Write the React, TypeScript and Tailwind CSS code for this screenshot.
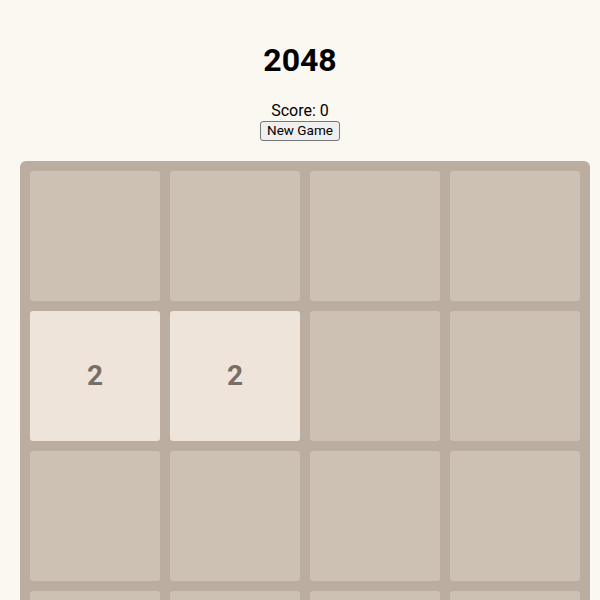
import React, { useState } from 'react';

type Grid = number[][];

const startGrid = (): Grid => [
  [0, 0, 0, 0],
  [2, 2, 0, 0],
  [0, 0, 0, 0],
  [0, 0, 0, 0],
];

const tileClass = (value: number) => {
  if (value === 0) return 'bg-[#cdc1b4]';
  if (value === 2) return 'bg-[#eee4da] text-[#776e65]';
  if (value === 4) return 'bg-[#ede0c8] text-[#776e65]';
  return 'bg-[#f2b179] text-[#f9f6f2]';
};

export default function App() {
  const [grid, setGrid] = useState<Grid>(startGrid);
  const [score, setScore] = useState(0);

  const newGame = () => {
    setGrid(startGrid());
    setScore(0);
  };

  return (
    <div className="min-h-screen bg-[#faf8f0] font-['Roboto','Liberation_Sans',sans-serif] text-black pt-[36px]">
      <h1 className="text-center text-[32px] font-bold leading-normal">2048</h1>
      <div className="mt-[15px] flex flex-col items-center">
        <p className="text-[16px] leading-normal">Score: {score}</p>
        <button
          onClick={newGame}
          className="-mt-[2px] h-[20px] w-[80px] rounded-[3px] border border-[#767676] bg-[#efefef] text-[13.5px] leading-none text-black"
        >
          New Game
        </button>
      </div>
      <div className="ml-[20px] mt-[20px] grid w-[570px] grid-cols-4 gap-[10px] rounded-[6px] bg-[#bbada0] p-[10px]">
        {grid.flat().map((value, i) => (
          <div
            key={i}
            className={`flex h-[130px] w-[130px] items-center justify-center rounded-[3px] text-[28px] font-bold ${tileClass(value)}`}
          >
            {value !== 0 ? value : ''}
          </div>
        ))}
      </div>
    </div>
  );
}
